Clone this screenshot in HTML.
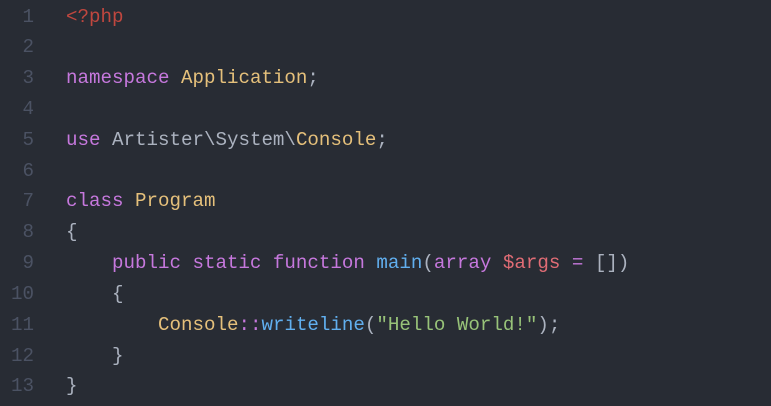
<!DOCTYPE html>
<html><head><meta charset="utf-8"><style>
html,body{margin:0;padding:0;background:#282c34;width:771px;height:406px;overflow:hidden}
.w{position:relative;font-family:"Liberation Mono",monospace;font-size:19.17px;line-height:30.83px;padding-top:1.5px}
.l{display:flex;height:30.83px;white-space:pre}
.n{width:34px;text-align:right;color:#4b5263}
.c{position:absolute;left:66px;color:#abb2bf}
.k{color:#c678dd}.y{color:#e5c07b}.r{color:#c0473f}.v{color:#e06c75}.f{color:#61afef}.s{color:#98c379}
</style></head><body><div class="w">
<div class="l"><span class="n">1</span><span class="c"><span class="r">&lt;?php</span></span></div>
<div class="l"><span class="n">2</span></div>
<div class="l"><span class="n">3</span><span class="c"><span class="k">namespace</span> <span class="y">Application</span>;</span></div>
<div class="l"><span class="n">4</span></div>
<div class="l"><span class="n">5</span><span class="c"><span class="k">use</span> Artister\System\<span class="y">Console</span>;</span></div>
<div class="l"><span class="n">6</span></div>
<div class="l"><span class="n">7</span><span class="c"><span class="k">class</span> <span class="y">Program</span></span></div>
<div class="l"><span class="n">8</span><span class="c">{</span></div>
<div class="l"><span class="n">9</span><span class="c">    <span class="k">public static function</span> <span class="f">main</span>(<span class="k">array</span> <span class="v">$args</span> <span class="k">=</span> [])</span></div>
<div class="l"><span class="n">10</span><span class="c">    {</span></div>
<div class="l"><span class="n">11</span><span class="c">        <span class="y">Console</span><span class="k">::</span><span class="f">writeline</span>(<span class="s">"Hello World!"</span>);</span></div>
<div class="l"><span class="n">12</span><span class="c">    }</span></div>
<div class="l"><span class="n">13</span><span class="c">}</span></div>
</div></body></html>
